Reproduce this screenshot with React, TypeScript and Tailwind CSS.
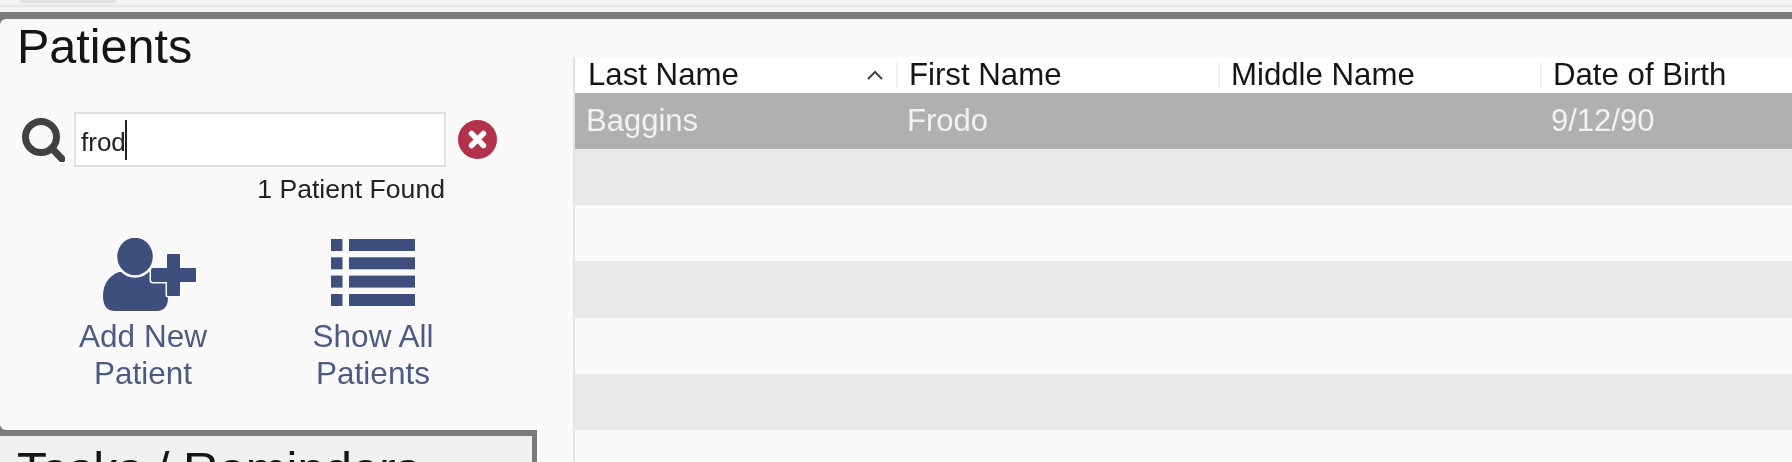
const columns = ["Last Name", "First Name", "Middle Name", "Date of Birth"];
const emptyRows = [0, 1, 2, 3, 4, 5];

const AddPatientIcon = () => (
  <svg width="93" height="73" viewBox="0 0 93 73" fill="#3e4f7d">
    <path d="M16 34 C8 37 0 44 0 58 C0 68 4 73 12 73 L54 73 C61 73 65 68 65 60 L65 38 C60 35 55 34 50 34 Z" />
    <ellipse cx="32" cy="18.5" rx="19" ry="20" stroke="#fafafa" strokeWidth="2.5" />
    <path
      d="M65 16 H76 Q77 16 77 17 V30 H92 Q93 30 93 31 V43 Q93 44 92 44 H77 V57 Q77 58 76 58 H65 Q64 58 64 57 V44 H50 Q48 44 48 42 V32 Q48 30 50 30 H64 V17 Q64 16 65 16 Z"
      stroke="#fafafa"
      strokeWidth="3"
      paintOrder="stroke"
    />
  </svg>
);

const ListIcon = () => (
  <svg width="84" height="68" viewBox="0 0 84 68" fill="#3e4f7d">
    {[0, 18.3, 36.6, 55].map((y) => (
      <g key={y}>
        <rect x="0" y={y} width="11.5" height="12" />
        <rect x="18" y={y} width="66" height="12" />
      </g>
    ))}
  </svg>
);

export default function App() {
  return (
    <div className="flex h-[462px] w-[1792px] flex-col overflow-hidden bg-[#fafafa] font-['Liberation_Sans',Arial,sans-serif] blur-[0.6px]">
      <div className="h-[12px] bg-[#f2f2f2]">
        <div className="h-[7px] border-b-2 border-[#e6e6e6]">
          <div className="ml-[20px] h-[3px] w-[96px] rounded-b-md bg-[#e2e2e2]" />
        </div>
      </div>
      <div className="h-[7px] bg-[#7b7b7b]" />

      <div className="flex min-h-0 flex-1">
        <div className="w-[573px] shrink-0 bg-[#7b7b7b]">
          <div className="h-[411px] rounded-l-md bg-[#fafafa] px-[17px]">
            <h1 className="pt-[3px] text-[48.5px] leading-[48px] font-normal text-[#151515]">Patients</h1>

            <div className="mt-[42px] flex items-center">
              <svg width="44" height="44" viewBox="0 0 44 44" className="ml-[4px]" fill="none" stroke="#414141" strokeWidth="7">
                <circle cx="20" cy="19" r="15.5" />
                <path d="M31.5 31 L41 41" strokeLinecap="round" />
              </svg>
              <div className="ml-[9px] flex h-[55px] w-[372px] items-center border-2 border-[#e0e0e0] bg-white pl-[5px] text-[26px] text-[#222]">
                <span className="pt-[6px]">frod</span>
                <span className="-ml-[1px] h-[40px] w-[2px] bg-[#222]" />
              </div>
              <svg width="39" height="39" viewBox="0 0 39 39" className="ml-[12px]">
                <circle cx="19.5" cy="19.5" r="19.5" fill="#b2324b" />
                <path d="M13.5 13.5 L25.5 25.5 M25.5 13.5 L13.5 25.5" stroke="#fff" strokeWidth="5.5" strokeLinecap="round" />
              </svg>
            </div>

            <p className="mt-[7px] w-[428px] text-right text-[26.6px] leading-[30px] text-[#222]">1 Patient Found</p>

            <div className="mt-[34px] ml-[36px] flex gap-[50px] text-center text-[31.5px] leading-[37px] text-[#4d5b82]">
              <button className="flex w-[180px] flex-col items-center">
                <span className="ml-[12px] h-[80px]">
                  <AddPatientIcon />
                </span>
                Add New
                <br />
                Patient
              </button>
              <button className="flex w-[180px] flex-col items-center">
                <span className="h-[80px] pt-[1px]">
                  <ListIcon />
                </span>
                Show All
                <br />
                Patients
              </button>
            </div>
          </div>

          <div className="flex h-[40px]">
            <div className="w-[537px] border-t-[6px] border-r-[5px] border-[#7b7b7b] bg-[#f0f0f0] pl-[17px] text-[49px] leading-[66px] text-[#151515]">
              Tasks / Reminders
            </div>
            <div className="flex-1 bg-[#fafafa]" />
          </div>
        </div>

        <div className="min-w-0 flex-1 pt-[38px]">
          <div className="border-l-2 border-[#e4e4e4]">
            <div className="grid h-[36px] grid-cols-[321px_322px_322px_1fr] items-center bg-white text-[31.2px] text-[#151515]">
              {columns.map((name, i) => (
                <div key={name} className="flex h-[26px] items-center border-l-2 border-[#f0f0f0] pl-[11px] first:border-transparent">
                  <span className="leading-none">{name}</span>
                  {i === 0 && (
                    <svg width="18" height="12" viewBox="0 0 18 12" fill="none" stroke="#444" strokeWidth="2" className="ml-auto mr-[12px]">
                      <path d="M2 10 L9 3 L16 10" />
                    </svg>
                  )}
                </div>
              ))}
            </div>
            <div className="grid h-[56px] grid-cols-[321px_322px_322px_1fr] items-center bg-[#b0b0b0] text-[31px] text-[#f2f2f2]">
              <span className="pl-[11px]">Baggins</span>
              <span className="pl-[11px]">Frodo</span>
              <span />
              <span className="pl-[11px]">9/12/90</span>
            </div>
            {emptyRows.map((row) => (
              <div key={row} className="h-[56.2px] odd:bg-[#e8e8e8] even:bg-[#fafafa]" />
            ))}
          </div>
        </div>
      </div>
    </div>
  );
}
